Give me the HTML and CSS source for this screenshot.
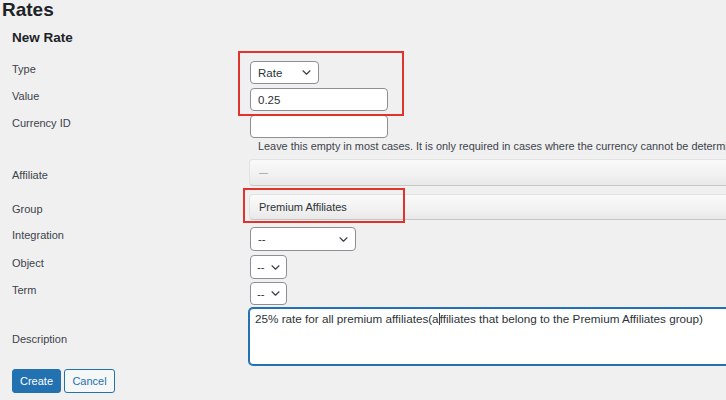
FILE: index.html
```html
<!DOCTYPE html>
<html lang="en">
<head>
<meta charset="utf-8">
<title>Rates</title>
<link rel="stylesheet" href="styles.css">
</head>
<body>
<div class="page">
  <h1 class="title">Rates</h1>
  <h2 class="subtitle">New Rate</h2>
  <div class="form">
    <div class="row row-type">
      <div class="lbl">Type</div>
      <div class="field">
        <div class="select sel-type"><span>Rate</span><svg class="chev" width="9" height="5" viewBox="0 0 9 5"><path d="M1 0.8l3.5 3.4L8 0.8"/></svg></div>
      </div>
    </div>
    <div class="row row-value">
      <div class="lbl">Value</div>
      <div class="field"><div class="input in-value">0.25</div></div>
    </div>
    <div class="row row-currency">
      <div class="lbl">Currency ID</div>
      <div class="field"><div class="input in-currency"></div></div>
    </div>
    <div class="row row-help">
      <div class="lbl"></div>
      <div class="field"><p class="help">Leave this empty in most cases. It is only required in cases where the currency cannot be determined.</p></div>
    </div>
    <div class="row row-affiliate">
      <div class="lbl lbl-affiliate">Affiliate</div>
      <div class="field"><div class="combo"><span class="placeholder">—</span></div></div>
    </div>
    <div class="row row-group">
      <div class="lbl lbl-group">Group</div>
      <div class="field"><div class="combo"><span>Premium Affiliates</span></div></div>
    </div>
    <div class="row row-integration">
      <div class="lbl">Integration</div>
      <div class="field">
        <div class="select sel-integration"><span>--</span><svg class="chev" width="9" height="5" viewBox="0 0 9 5"><path d="M1 0.8l3.5 3.4L8 0.8"/></svg></div>
      </div>
    </div>
    <div class="row row-object">
      <div class="lbl">Object</div>
      <div class="field">
        <div class="select sel-small"><span>--</span><svg class="chev" width="9" height="5" viewBox="0 0 9 5"><path d="M1 0.8l3.5 3.4L8 0.8"/></svg></div>
      </div>
    </div>
    <div class="row row-term">
      <div class="lbl">Term</div>
      <div class="field">
        <div class="select sel-small sel-term"><span>--</span><svg class="chev" width="9" height="5" viewBox="0 0 9 5"><path d="M1 0.8l3.5 3.4L8 0.8"/></svg></div>
      </div>
    </div>
    <div class="row row-desc">
      <div class="lbl lbl-desc">Description</div>
      <div class="field"><div class="textarea">25% rate for all premium affiliates(a<span class="caret"></span>ffiliates that belong to the Premium Affiliates group)</div></div>
    </div>
    <div class="actions">
      <span class="btn btn-primary">Create</span>
      <span class="btn btn-secondary">Cancel</span>
    </div>
  </div>
  <div class="mark mark-1"></div>
  <div class="mark mark-2"></div>
</div>
</body>
</html>
```
FILE: styles.css
```css
* { box-sizing: border-box; }
html, body { margin: 0; padding: 0; }
body {
  background: #f0f0f1;
  font-family: "Liberation Sans", Arial, sans-serif;
  color: #3c434a;
}
.page {
  position: relative;
  width: 726px;
  height: 400px;
  overflow: hidden;
}
.title {
  margin: 0;
  padding-left: 2px;
  font-size: 19px;
  line-height: 20px;
  font-weight: bold;
  color: #1d2327;
}
.subtitle {
  margin: 9px 0 0 12px;
  font-size: 13.5px;
  line-height: 18px;
  font-weight: bold;
  color: #1d2327;
}
.form {
  margin-top: 14px;
  padding-left: 12px;
}
.row {
  display: flex;
  align-items: flex-start;
}
.lbl {
  flex: none;
  width: 238px;
  font-size: 11px;
  line-height: 16px;
  color: #3c434a;
}
.field {
  flex: 1;
  min-width: 0;
}
.row-type { height: 27px; }
.row-value { height: 27px; }
.row-currency { height: 23px; }
.row-help { height: 21px; }
.row-affiliate { height: 35px; }
.row-group { height: 33px; }
.row-integration { height: 28px; }
.row-object { height: 27px; }
.row-term { height: 26px; }
.row-desc { height: 61px; }
.lbl-affiliate { padding-top: 8px; }
.lbl-group { padding-top: 7px; }
.lbl-desc { padding-top: 23px; }

.select, .input {
  background: #fff;
  border: 1px solid #8c8f94;
  border-radius: 4px;
  font-size: 11.5px;
  color: #2c3338;
  height: 23px;
  display: flex;
  align-items: center;
}
.select {
  justify-content: space-between;
  padding: 0 7px 0 7px;
}
.input { padding: 0 7px; }
.chev { flex: none; display: block; }
.chev path { fill: none; stroke: #3c434a; stroke-width: 1.2; stroke-linecap: round; stroke-linejoin: round; }
.sel-type { width: 69px; padding-right: 7px; }
.in-value, .in-currency { width: 138px; }
.sel-integration { width: 106px; height: 24px; }
.sel-small { width: 37px; height: 24px; padding: 0 6px; }
.sel-term { height: 23px; }

.help {
  margin: 0;
  padding-left: 8px;
  font-size: 10.9px;
  line-height: 16px;
  white-space: nowrap;
  color: #3c434a;
}
.combo {
  margin-left: -1px;
  width: 520px;
  height: 27px;
  border: 1px solid #e2e2e3;
  border-bottom-color: #c6c7c9;
  border-radius: 4px;
  background: linear-gradient(to bottom, #fafafa 0%, #f1f1f1 60%, #e9e9ea 100%);
  display: flex;
  align-items: center;
  padding-left: 9px;
  font-size: 11px;
  color: #2c3338;
}
.combo .placeholder { color: #787c82; font-size: 9px; }
.row-group .combo { height: 26px; }

.textarea {
  margin-left: -1px;
  width: 520px;
  height: 57px;
  background: #fff;
  border: 1px solid #2271b1;
  box-shadow: 0 0 0 1px #2271b1;
  border-radius: 4px;
  padding: 2px 5px;
  font-size: 11.7px;
  line-height: 16px;
  color: #2c3338;
  white-space: nowrap;
}
.caret {
  display: inline-block;
  width: 1px;
  height: 12px;
  background: #3c434a;
  vertical-align: -2px;
}
.actions {
  display: flex;
  gap: 3px;
}
.btn {
  height: 24px;
  border-radius: 3px;
  font-size: 11px;
  display: flex;
  align-items: center;
  justify-content: center;
}
.btn-primary {
  width: 49px;
  background: #2271b1;
  border: 1px solid #2271b1;
  color: #fff;
}
.btn-secondary {
  width: 51px;
  background: #f6f7f7;
  border: 1px solid #2271b1;
  color: #2271b1;
}
.mark {
  position: absolute;
  border: 2px solid #e0332b;
}
.mark-1 { left: 238px; top: 51px; width: 166px; height: 65px; }
.mark-2 { left: 243px; top: 188px; width: 162px; height: 35px; }
```
